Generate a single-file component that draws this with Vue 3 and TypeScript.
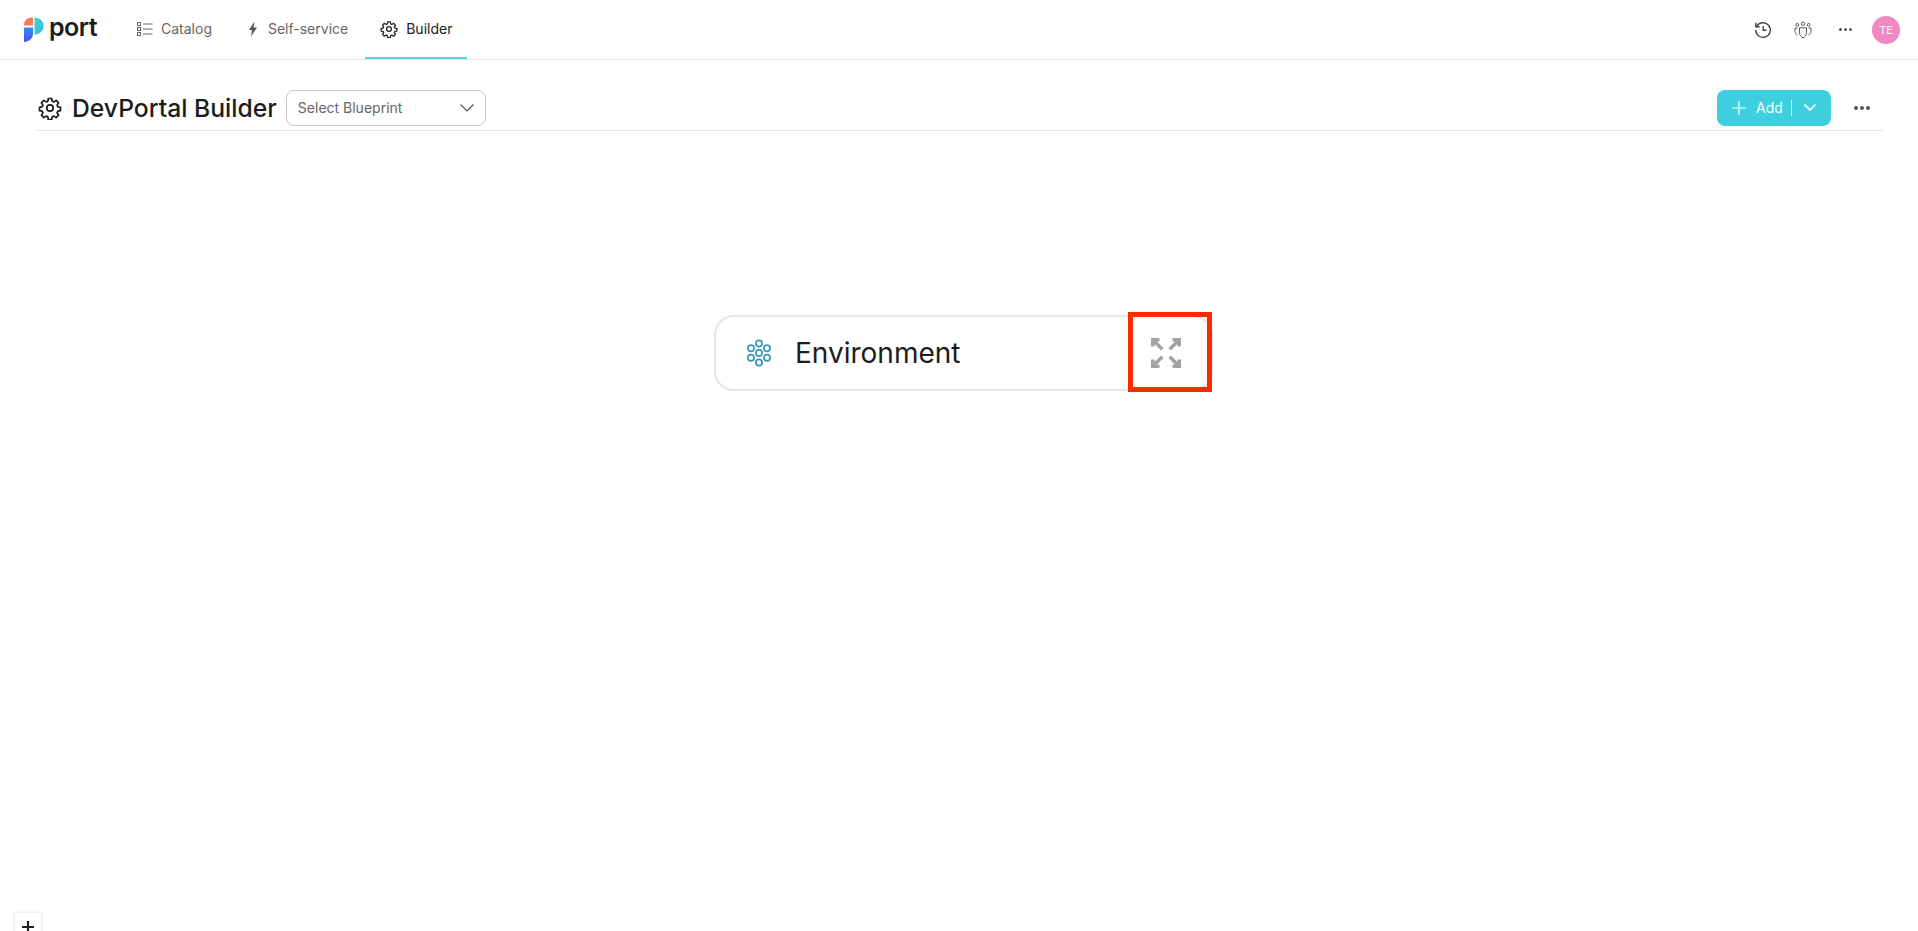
<template>
  <div class="page">
    <header class="topbar">
      <div class="logo">
        <svg width="20" height="25" viewBox="0 0 20 25">
          <defs>
            <linearGradient id="logoTeal" x1="0" y1="0" x2="1" y2="1">
              <stop offset="0" stop-color="#3fd8d0" />
              <stop offset="1" stop-color="#38b6e8" />
            </linearGradient>
            <linearGradient id="logoBlue" x1="0" y1="0" x2="0" y2="1">
              <stop offset="0" stop-color="#2f8cf0" />
              <stop offset="1" stop-color="#4a4df0" />
            </linearGradient>
          </defs>
          <path d="M0 8C0 3.500 3 .5 8 .5h1v8H0z" fill="#fb7a5c" />
          <path d="M0 10.500h9V17c0 4.400-4 7.500-9 8z" fill="url(#logoBlue)" />
          <path d="M10.500 .5c5.500 0 9 3.800 9 8.500s-3.500 8.500-9 8.500z" fill="url(#logoTeal)" />
        </svg>
        <span class="logo-text">port</span>
      </div>
      <nav class="tabs">
        <a v-for="tab in tabs" :key="tab.label" class="tab" :class="{ active: tab.active }">
          <svg v-if="tab.icon === 'list'" width="16" height="16" viewBox="0 0 16 16" fill="none" stroke="#666" stroke-width="1">
            <rect x=".5" y="1.500" width="3" height="3" />
            <rect x=".5" y="6.500" width="3" height="3" />
            <rect x=".5" y="11.500" width="3" height="3" />
            <path d="M6 3h9.500M6 8h9.500M6 13h9.500" />
          </svg>
          <svg v-else-if="tab.icon === 'bolt'" width="16" height="16" viewBox="0 0 16 16">
            <path d="M10.500 .5 5 9h3L7 15.500l6-9H9.500z" fill="#555" />
          </svg>
          <svg v-else width="18" height="18" viewBox="0 0 24 24" fill="none" stroke="#222" stroke-width="1.700">
            <circle cx="12" cy="12" r="3.200" />
            <path :d="gearPath" stroke-linejoin="round" />
          </svg>
          <span>{{ tab.label }}</span>
        </a>
      </nav>
      <div class="top-actions">
        <svg width="18" height="18" viewBox="0 0 18 18" fill="none" stroke="#444" stroke-width="1.400">
          <path d="M2.600 5.500A7.300 7.300 0 1 1 1.700 9" />
          <path d="M1.800 1.800v3.900h3.900" />
          <path d="M9.200 5v4.300h3.300" />
        </svg>
        <svg width="18" height="18" viewBox="0 0 18 18" fill="none" stroke="#555" stroke-width="1">
          <circle cx="9" cy="2.800" r="1.700" />
          <circle cx="3.300" cy="3.800" r="1.400" />
          <circle cx="14.700" cy="3.800" r="1.400" />
          <path d="M5.500 6.800h7v5c0 2.500-1.600 4-3.500 5-1.900-1-3.500-2.500-3.500-5z" />
          <path d="M3.500 7H1v3.500c0 1.600.8 2.800 2.500 3.500M14.500 7H17v3.500c0 1.600-.8 2.800-2.500 3.500" />
        </svg>
        <span class="dots small"><i></i><i></i><i></i></span>
        <div class="avatar">TE</div>
      </div>
    </header>

    <section class="title-row">
      <svg class="title-gear" width="24" height="24" viewBox="0 0 24 24" fill="none" stroke="#1c1c1c" stroke-width="1.700">
        <circle cx="12" cy="12" r="3.200" />
        <path :d="gearPath" stroke-linejoin="round" />
      </svg>
      <h1>DevPortal Builder</h1>
      <div class="select">
        <span>Select Blueprint</span>
        <svg width="16" height="10" viewBox="0 0 16 10" fill="none" stroke="#555" stroke-width="1.200">
          <path d="M1.500 1.500 8 8l6.500-6.500" />
        </svg>
      </div>
      <div class="spacer"></div>
      <button class="add-btn">
        <svg width="16" height="16" viewBox="0 0 16 16" stroke="#fff" stroke-width="1.200">
          <path d="M8 1v14M1 8h14" />
        </svg>
        <span>Add</span>
        <i class="sep"></i>
        <svg class="add-caret" width="14" height="9" viewBox="0 0 14 9" fill="none" stroke="#fff" stroke-width="1.700">
          <path d="M1.500 1.500 7 7l5.500-5.500" />
        </svg>
      </button>
      <span class="dots"><i></i><i></i><i></i></span>
    </section>

    <main class="canvas">
      <div class="node">
        <svg width="28" height="28" viewBox="0 0 28 28" fill="none" stroke="#3a97b8" stroke-width="1.700">
          <circle v-for="(c, i) in cells" :key="i" :cx="c[0]" :cy="c[1]" r="3.100" />
        </svg>
        <span class="node-name">Environment</span>
        <svg class="expand" width="30" height="30" viewBox="0 0 30 30" fill="none" stroke="#a3a3a3" stroke-width="3.600">
          <path d="M1.800 8.500V1.800h6.700M1.800 1.800l9.500 9.500M21.500 1.800h6.700v6.700M28.200 1.800l-9.500 9.500M1.800 21.500v6.700h6.700M1.800 28.200l9.500-9.500M21.500 28.200h6.700v-6.700M28.200 28.200l-9.500-9.500" />
        </svg>
      </div>
      <div class="highlight"></div>
      <div class="zoom-box">
        <svg width="14" height="14" viewBox="0 0 14 14" stroke="#222" stroke-width="2.200">
          <path d="M7 1v12M1 7h12" />
        </svg>
      </div>
    </main>
  </div>
</template>

<script setup lang="ts">
const tabs = [
  { label: 'Catalog', icon: 'list', active: false },
  { label: 'Self-service', icon: 'bolt', active: false },
  { label: 'Builder', icon: 'gear', active: true }
];

const gearPath =
  'M10.300 2.500h3.400l.5 2.700 1.700.7 2.300-1.500 2.400 2.400-1.500 2.300.7 1.700 2.700.5v3.400l-2.700.5-.7 1.700 1.500 2.300-2.400 2.400-2.300-1.500-1.700.7-.5 2.700h-3.400l-.5-2.700-1.700-.7-2.300 1.500-2.400-2.400 1.500-2.300-.7-1.700-2.700-.5v-3.400l2.700-.5.7-1.700-1.500-2.300 2.400-2.400 2.300 1.500 1.700-.7z';

const cells: number[][] = [
  [14, 4.500],
  [6, 9.300],
  [22, 9.300],
  [14, 14],
  [6, 18.700],
  [22, 18.700],
  [14, 23.500]
];
</script>

<style>
html,
body {
  margin: 0;
  background: #fff;
  overflow: hidden;
}
</style>

<style scoped>
.page {
  width: 1918px;
  height: 931px;
  display: flex;
  flex-direction: column;
  font-family: Inter, "Liberation Sans", sans-serif;
  color: #1c1c1c;
}

.topbar {
  height: 60px;
  box-sizing: border-box;
  border-bottom: 1px solid #e3e3e3;
  display: flex;
  align-items: center;
  padding: 0 18px 0 24px;
}

.logo {
  display: flex;
  align-items: center;
  gap: 5px;
  width: 98px;
}

.logo-text {
  font-size: 25px;
  font-weight: 600;
  line-height: 1;
  margin-top: -5px;
  letter-spacing: -0.5px;
}

.tabs {
  display: flex;
  align-items: stretch;
  height: 59px;
  gap: 2px;
}

.tab {
  display: flex;
  align-items: center;
  gap: 8px;
  padding: 0 15px;
  font-size: 14px;
  color: #666;
  box-sizing: border-box;
  border-bottom: 2px solid transparent;
}

.tab.active {
  color: #222;
  border-bottom-color: #55d6e4;
}

.top-actions {
  margin-left: auto;
  display: flex;
  align-items: center;
  gap: 22px;
}

.avatar {
  width: 28px;
  height: 28px;
  border-radius: 50%;
  background: #ee8ac1;
  color: #fff;
  font-size: 11px;
  display: flex;
  align-items: center;
  justify-content: center;
}

.title-row {
  margin: 0 35px 0 36px;
  height: 71px;
  box-sizing: border-box;
  border-bottom: 1px solid #e3e3e3;
  display: flex;
  align-items: center;
  padding: 25px 0 0 2px;
}

.title-gear {
  margin-right: 10px;
}

h1 {
  margin: 0 9px 0 0;
  font-size: 24.700px;
  font-weight: 500;
  color: #1c1c1c;
}

.select {
  width: 200px;
  height: 36px;
  box-sizing: border-box;
  border: 1px solid #c9c9c9;
  border-radius: 8px;
  display: flex;
  align-items: center;
  justify-content: space-between;
  padding: 0 10px 0 11px;
  font-size: 14px;
  color: #666;
}

.spacer {
  flex: 1;
}

.add-btn {
  width: 114px;
  height: 36px;
  border: 0;
  border-radius: 8px;
  background: #3fd0df;
  color: #fff;
  display: flex;
  align-items: center;
  padding: 0 0 0 14px;
  font-family: inherit;
  font-size: 14px;
}

.add-btn span {
  margin-left: 9px;
}

.sep {
  width: 1.500px;
  height: 16px;
  background: #fff;
  margin-left: 8px;
}

.add-caret {
  margin-left: 11px;
}

.dots {
  display: inline-flex;
  gap: 2px;
  margin: 0 13px 0 23px;
}

.dots i {
  width: 4px;
  height: 4px;
  border-radius: 50%;
  background: #555;
}

.dots.small {
  margin: 0 -2px 0 5px;
}

.dots.small i {
  width: 3px;
  height: 3px;
}

.canvas {
  position: relative;
  flex: 1;
}

.node {
  position: absolute;
  left: 714px;
  top: 184px;
  width: 499px;
  height: 76px;
  box-sizing: border-box;
  border: 2px solid #e5e5e5;
  border-radius: 20px;
  display: flex;
  align-items: center;
  padding-left: 29px;
}

.node-name {
  margin-left: 22px;
  font-size: 28px;
  color: #1c1c1c;
}

.expand {
  position: absolute;
  left: 435px;
  top: 21px;
}

.highlight {
  position: absolute;
  left: 1128px;
  top: 181px;
  width: 84px;
  height: 80px;
  box-sizing: border-box;
  border: 5px solid #f92c00;
}

.zoom-box {
  position: absolute;
  left: 15px;
  top: 782px;
  width: 26px;
  height: 26px;
  box-sizing: border-box;
  background: #fff;
  box-shadow: 0 0 3px rgba(0, 0, 0, 0.18);
  display: flex;
  justify-content: center;
  padding-top: 7px;
}
</style>
